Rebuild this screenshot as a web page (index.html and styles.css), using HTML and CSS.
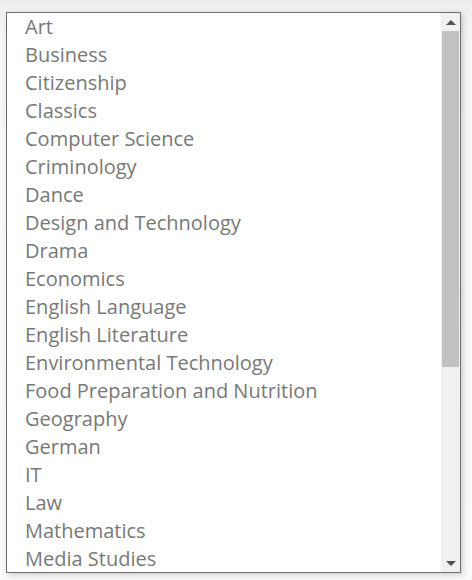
FILE: index.html
```html
<!DOCTYPE html>
<html>
<head>
<meta charset="utf-8">
<link rel="stylesheet" href="styles.css">
</head>
<body>
<div class="page">
  <div class="listbox">
    <ul class="options">
      <li>Art</li>
      <li>Business</li>
      <li>Citizenship</li>
      <li>Classics</li>
      <li>Computer Science</li>
      <li>Criminology</li>
      <li>Dance</li>
      <li>Design and Technology</li>
      <li>Drama</li>
      <li>Economics</li>
      <li>English Language</li>
      <li>English Literature</li>
      <li>Environmental Technology</li>
      <li>Food Preparation and Nutrition</li>
      <li>Geography</li>
      <li>German</li>
      <li>IT</li>
      <li>Law</li>
      <li>Mathematics</li>
      <li>Media Studies</li>
    </ul>
    <div class="scrollbar">
      <div class="arrow up"></div>
      <div class="track"><div class="thumb"></div></div>
      <div class="arrow down"></div>
    </div>
  </div>
</div>
</body>
</html>
```

FILE: styles.css
```css
html, body {
  margin: 0;
  padding: 0;
}
body {
  width: 472px;
  height: 580px;
  overflow: hidden;
  background: linear-gradient(#eeeeee, #f6f6f6 40px, #fafafa);
  font-family: "Open Sans", "DejaVu Sans", sans-serif;
}
.page {
  padding: 12px 0 0 6px;
}
.listbox {
  box-sizing: border-box;
  width: 455px;
  height: 561px;
  border: 1px solid #6e6e6e;
  background: #ffffff;
  display: flex;
  overflow: hidden;
  box-shadow: 2px 2px 6px rgba(0, 0, 0, 0.18);
}
.options {
  list-style: none;
  margin: 0;
  padding: 0 0 0 18px;
  flex: 1;
  overflow: hidden;
}
.options li {
  height: 28px;
  line-height: 28px;
  font-size: 20px;
  color: #787878;
  white-space: nowrap;
}
.scrollbar {
  width: 19px;
  flex: none;
  background: #f1f1f1;
  display: flex;
  flex-direction: column;
  align-items: center;
}
.arrow {
  width: 0;
  height: 0;
  border-left: 5px solid transparent;
  border-right: 5px solid transparent;
  flex: none;
}
.arrow.up {
  margin: 7px 0 6px;
  border-bottom: 5px solid #505050;
}
.arrow.down {
  margin: 6px 0 6px;
  border-top: 5px solid #505050;
}
.track {
  flex: 1;
  width: 100%;
  display: flex;
  justify-content: center;
}
.thumb {
  width: 17px;
  height: 336px;
  background: #c1c1c1;
}
```
